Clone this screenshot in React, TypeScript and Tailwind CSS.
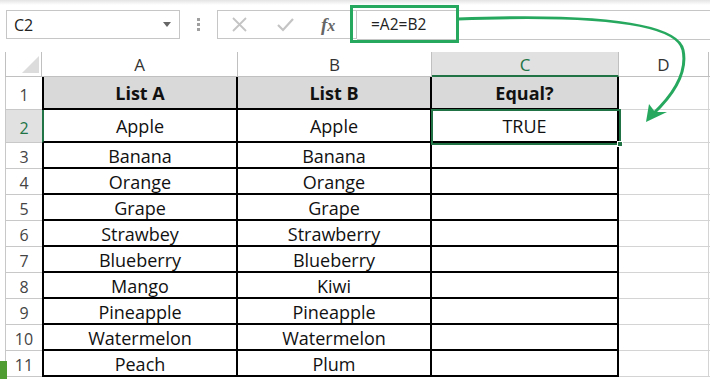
import React from "react";

const rows: [string, string][] = [
  ["Banana", "Banana"],
  ["Orange", "Orange"],
  ["Grape", "Grape"],
  ["Strawbey", "Strawberry"],
  ["Blueberry", "Blueberry"],
  ["Mango", "Kiwi"],
  ["Pineapple", "Pineapple"],
  ["Watermelon", "Watermelon"],
  ["Peach", "Plum"],
];

const font = { fontFamily: '"Open Sans", "Noto Sans", sans-serif' };

export default function App() {
  return (
    <div className="relative w-[710px] h-[379px] overflow-hidden bg-white text-[#111]" style={font}>
      {/* Toolbar */}
      <div className="h-[52px] flex flex-col bg-white">
        <div className="h-[5px] bg-gradient-to-b from-[#e4e4e4] to-white" />
        <div className="flex items-start mt-[5px] h-[30px]">
          <div className="ml-[6px] w-[174px] h-[29px] border border-[#c6c6c6] bg-white flex items-center justify-between pl-[7px] pr-[8px]">
            <span className="text-[16px] text-[#222]">C2</span>
            <svg width="8" height="5" viewBox="0 0 8 5"><polygon points="0,0 8,0 4,5" fill="#666" /></svg>
          </div>
          <div className="w-[37px] h-[29px] flex flex-col items-center justify-center gap-[2px]">
            <div className="w-[3px] h-[3px] bg-[#a0a0a0]" />
            <div className="w-[3px] h-[3px] bg-[#a0a0a0]" />
            <div className="w-[3px] h-[3px] bg-[#a0a0a0]" />
          </div>
          <div className="w-[140px] h-[29px] border border-[#c6c6c6] bg-white flex items-center">
            <svg className="ml-[14px]" width="15" height="15" viewBox="0 0 15 15">
              <path d="M1 1 L14 14 M14 1 L1 14" stroke="#c4c4c4" strokeWidth="1.8" />
            </svg>
            <svg className="ml-[30px]" width="17" height="14" viewBox="0 0 17 14">
              <path d="M1 7 L6 12 L16 1" stroke="#c4c4c4" strokeWidth="2.2" fill="none" />
            </svg>
            <span
              className="ml-[27px] text-[19px] italic font-bold text-[#666] leading-none"
              style={{ fontFamily: '"Liberation Serif", "DejaVu Serif", serif' }}
            >
              f<span className="text-[16px]">x</span>
            </span>
          </div>
          <div className="flex-1 h-[30px] border-y border-[#c6c6c6] bg-white flex items-center pl-[14px]">
            <span className="text-[15.5px] text-[#222]">=A2=B2</span>
          </div>
        </div>
      </div>

      {/* Column headers */}
      <div className="flex h-[25px]">
        <div className="w-[5px]" />
        <div className="relative w-[37px] border-l border-r border-b border-[#c0c0c0]">
          <svg className="absolute right-[2px] bottom-[3px]" width="17" height="17" viewBox="0 0 17 17">
            <polygon points="0,17 17,0 17,17" fill="#dcdcdc" />
          </svg>
        </div>
        <div className="w-[196px] border-r border-b border-[#c0c0c0] flex items-center justify-center pt-[2px] text-[17px] text-[#333]">A</div>
        <div className="w-[194px] border-r border-b border-[#c0c0c0] flex items-center justify-center pt-[2px] text-[17px] text-[#333]">B</div>
        <div className="w-[187px] bg-[#e1e1e1] border-r border-[#c0c0c0] border-b-2 border-b-[#217346] flex items-center justify-center pt-[2px] text-[17px] text-[#217346]">C</div>
        <div className="w-[90px] border-r border-b border-[#c0c0c0] flex items-center justify-center pt-[2px] text-[17px] text-[#333]">D</div>
        <div className="flex-1 border-b border-[#c0c0c0]" />
      </div>

      {/* Row 1 */}
      <div className="flex h-[33px]">
        <div className="w-[5px]" />
        <div className="w-[37px] border-l border-b border-[#c8c8c8] flex items-center justify-center pt-[3px] text-[16px] text-[#444]">1</div>
        <div className="w-[196px] bg-[#d9d9d9] border-l-2 border-r-2 border-b-2 border-black flex items-center justify-center pt-[1px] text-[18px] font-bold">List A</div>
        <div className="w-[194px] bg-[#d9d9d9] border-r-2 border-b-2 border-black flex items-center justify-center pt-[1px] text-[18px] font-bold">List B</div>
        <div className="w-[187px] bg-[#d9d9d9] border-r-2 border-b-2 border-black flex items-center justify-center pt-[1px] text-[18px] font-bold">Equal?</div>
        <div className="w-[90px] border-r border-b border-[#d4d4d4]" />
        <div className="flex-1 border-b border-[#d4d4d4]" />
      </div>

      {/* Row 2 */}
      <div className="flex h-[33px]">
        <div className="w-[5px]" />
        <div className="w-[37px] bg-[#e1e1e1] border-l border-b border-[#c8c8c8] flex items-center justify-center pt-[3px] text-[16px] text-[#217346]">2</div>
        <div className="w-[196px] border-l-2 border-l-[#217346] border-r-2 border-b-2 border-black flex items-center justify-center pt-[2px] text-[18px]">Apple</div>
        <div className="w-[194px] border-r-2 border-b-2 border-black flex items-center justify-center pt-[2px] text-[18px]">Apple</div>
        <div className="w-[187px] border-r-2 border-b-2 border-black flex items-center justify-center pt-[2px] text-[18px]">TRUE</div>
        <div className="w-[90px] border-r border-b border-[#d4d4d4]" />
        <div className="flex-1 border-b border-[#d4d4d4]" />
      </div>

      {rows.map(([a, b], i) => (
        <div key={i} className="flex h-[26px]">
          <div className="w-[5px]" />
          <div className="w-[37px] border-l border-b border-[#c8c8c8] flex items-center justify-center pt-[3px] text-[16px] text-[#444]">{i + 3}</div>
          <div className="w-[196px] border-l-2 border-r-2 border-b-2 border-black flex items-center justify-center pt-[3px] text-[18px]">{a}</div>
          <div className="w-[194px] border-r-2 border-b-2 border-black flex items-center justify-center pt-[3px] text-[18px]">{b}</div>
          <div className="w-[187px] border-r-2 border-b-2 border-black" />
          <div className="w-[90px] border-r border-b border-[#d4d4d4]" />
          <div className="flex-1 border-b border-[#d4d4d4]" />
        </div>
      ))}

      {/* Selected cell C2 */}
      <div className="absolute left-[431px] top-[109px] w-[190px] h-[36px] border-2 border-[#217346]" />
      <div className="absolute left-[617px] top-[141px] w-[6px] h-[6px] bg-[#217346] border border-white" />

      {/* Green bar bottom-left */}
      <div className="absolute left-0 top-[361px] w-[7px] h-[18px] bg-[#4f9d33]" />

      {/* Highlight box on formula */}
      <div className="absolute left-[350px] top-[5px] w-[109px] h-[38px] border-[3px] border-[#27a85f]" />

      {/* Arrow */}
      <svg className="absolute left-0 top-0 pointer-events-none" width="710" height="379" viewBox="0 0 710 379">
        <path
          d="M458 19 C 565 15, 676 18, 683 50 C 688 74, 672 96, 653 114"
          stroke="#27a85f"
          strokeWidth="3"
          fill="none"
          strokeLinecap="round"
        />
        <polygon points="646,122 649,104 655,112 667,112" fill="#27a85f" />
      </svg>
    </div>
  );
}
